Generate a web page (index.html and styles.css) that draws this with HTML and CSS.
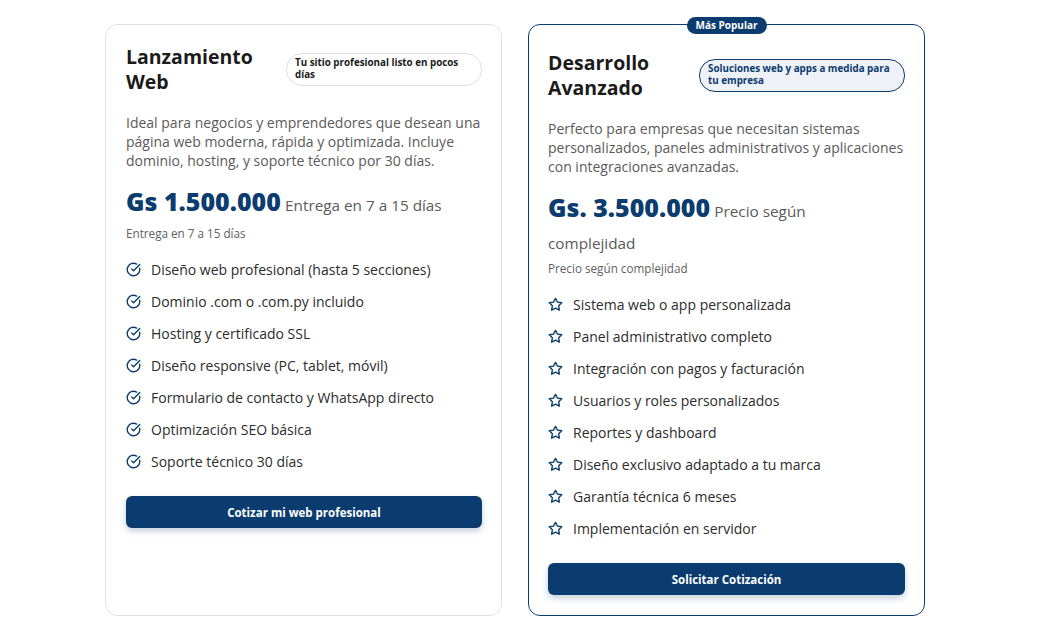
FILE: index.html
```html
<!DOCTYPE html>
<html lang="es">
<head>
<meta charset="utf-8">
<title>Planes</title>
<link rel="stylesheet" href="styles.css">
</head>
<body>
<main class="plans">
  <section class="plan">
    <header class="plan-head">
      <h2 class="plan-title">Lanzamiento Web</h2>
      <span class="tag tag-a">Tu sitio profesional listo en pocos días</span>
    </header>
    <p class="plan-desc">Ideal para negocios y emprendedores que desean una página web moderna, rápida y optimizada. Incluye dominio, hosting, y soporte técnico por 30 días.</p>
    <p class="price"><strong class="amount">Gs 1.500.000</strong> <span class="price-note">Entrega en 7 a 15 días</span></p>
    <p class="sub-note">Entrega en 7 a 15 días</p>
    <ul class="features">
      <li><svg class="ico" viewBox="0 0 24 24"><path d="M21.8 10A10 10 0 1 1 17 3.34"/><path d="m9 11 3 3L22 4"/></svg>Diseño web profesional (hasta 5 secciones)</li>
      <li><svg class="ico" viewBox="0 0 24 24"><path d="M21.8 10A10 10 0 1 1 17 3.34"/><path d="m9 11 3 3L22 4"/></svg>Dominio .com o .com.py incluido</li>
      <li><svg class="ico" viewBox="0 0 24 24"><path d="M21.8 10A10 10 0 1 1 17 3.34"/><path d="m9 11 3 3L22 4"/></svg>Hosting y certificado SSL</li>
      <li><svg class="ico" viewBox="0 0 24 24"><path d="M21.8 10A10 10 0 1 1 17 3.34"/><path d="m9 11 3 3L22 4"/></svg>Diseño responsive (PC, tablet, móvil)</li>
      <li><svg class="ico" viewBox="0 0 24 24"><path d="M21.8 10A10 10 0 1 1 17 3.34"/><path d="m9 11 3 3L22 4"/></svg>Formulario de contacto y WhatsApp directo</li>
      <li><svg class="ico" viewBox="0 0 24 24"><path d="M21.8 10A10 10 0 1 1 17 3.34"/><path d="m9 11 3 3L22 4"/></svg>Optimización SEO básica</li>
      <li><svg class="ico" viewBox="0 0 24 24"><path d="M21.8 10A10 10 0 1 1 17 3.34"/><path d="m9 11 3 3L22 4"/></svg>Soporte técnico 30 días</li>
    </ul>
    <button class="cta">Cotizar mi web profesional</button>
  </section>

  <section class="plan plan-featured">
    <span class="popular">Más Popular</span>
    <header class="plan-head">
      <h2 class="plan-title">Desarrollo Avanzado</h2>
      <span class="tag tag-b">Soluciones web y apps a medida para tu empresa</span>
    </header>
    <p class="plan-desc">Perfecto para empresas que necesitan sistemas personalizados, paneles administrativos y aplicaciones con integraciones avanzadas.</p>
    <p class="price"><strong class="amount">Gs. 3.500.000</strong> <span class="price-note">Precio según</span> <span class="price-note">complejidad</span></p>
    <p class="sub-note">Precio según complejidad</p>
    <ul class="features">
      <li><svg class="ico star" viewBox="0 0 24 24"><path d="M12 2l3.09 6.26L22 9.27l-5 4.87 1.18 6.88L12 17.77l-6.18 3.25L7 14.14 2 9.27l6.91-1.01z"/></svg>Sistema web o app personalizada</li>
      <li><svg class="ico star" viewBox="0 0 24 24"><path d="M12 2l3.09 6.26L22 9.27l-5 4.87 1.18 6.88L12 17.77l-6.18 3.25L7 14.14 2 9.27l6.91-1.01z"/></svg>Panel administrativo completo</li>
      <li><svg class="ico star" viewBox="0 0 24 24"><path d="M12 2l3.09 6.26L22 9.27l-5 4.87 1.18 6.88L12 17.77l-6.18 3.25L7 14.14 2 9.27l6.91-1.01z"/></svg>Integración con pagos y facturación</li>
      <li><svg class="ico star" viewBox="0 0 24 24"><path d="M12 2l3.09 6.26L22 9.27l-5 4.87 1.18 6.88L12 17.77l-6.18 3.25L7 14.14 2 9.27l6.91-1.01z"/></svg>Usuarios y roles personalizados</li>
      <li><svg class="ico star" viewBox="0 0 24 24"><path d="M12 2l3.09 6.26L22 9.27l-5 4.87 1.18 6.88L12 17.77l-6.18 3.25L7 14.14 2 9.27l6.91-1.01z"/></svg>Reportes y dashboard</li>
      <li><svg class="ico star" viewBox="0 0 24 24"><path d="M12 2l3.09 6.26L22 9.27l-5 4.87 1.18 6.88L12 17.77l-6.18 3.25L7 14.14 2 9.27l6.91-1.01z"/></svg>Diseño exclusivo adaptado a tu marca</li>
      <li><svg class="ico star" viewBox="0 0 24 24"><path d="M12 2l3.09 6.26L22 9.27l-5 4.87 1.18 6.88L12 17.77l-6.18 3.25L7 14.14 2 9.27l6.91-1.01z"/></svg>Garantía técnica 6 meses</li>
      <li><svg class="ico star" viewBox="0 0 24 24"><path d="M12 2l3.09 6.26L22 9.27l-5 4.87 1.18 6.88L12 17.77l-6.18 3.25L7 14.14 2 9.27l6.91-1.01z"/></svg>Implementación en servidor</li>
    </ul>
    <button class="cta">Solicitar Cotización</button>
  </section>
</main>
</body>
</html>
```

FILE: styles.css
```css
* { box-sizing: border-box; }

html, body {
  margin: 0;
  padding: 0;
  background: #ffffff;
}

body {
  font-family: "Open Sans", "DejaVu Sans", sans-serif;
  color: #222;
}

.plans {
  display: grid;
  grid-template-columns: 397px 397px;
  column-gap: 26px;
  padding: 24px 0 14px 105px;
}

.plan {
  position: relative;
  display: flex;
  flex-direction: column;
  align-items: stretch;
  border: 1px solid #dfe2ea;
  border-radius: 12px;
  padding: 19px 19px 20px 20px;
  background: #fff;
}

.plan-featured {
  border-color: #0b3c6f;
  padding-top: 25px;
  padding-left: 19px;
}

.popular {
  position: absolute;
  top: -8px;
  left: 50%;
  transform: translateX(-50%);
  background: #0b3c6f;
  color: #fff;
  font-size: 10px;
  font-weight: 700;
  line-height: 17px;
  padding: 0 9px;
  border-radius: 9px;
  white-space: nowrap;
}

.plan-head {
  display: flex;
  align-items: center;
  justify-content: space-between;
  gap: 12px;
}

.plan-title {
  margin: 0;
  font-size: 19.5px;
  font-weight: 700;
  line-height: 25px;
  color: #1b1b1b;
  max-width: 130px;
}

.tag {
  font-size: 9.8px;
  font-weight: 700;
  line-height: 12px;
  padding: 3px 10px 4px 8px;
  border-radius: 16px;
  border: 1px solid #dde1e8;
  background: #fff;
  color: #1b1b1b;
}

.tag-a { width: 196px; }

.tag-b {
  width: 206px;
  background: #eef1f5;
  border-color: #0b3c6f;
  color: #0b3c6f;
}

.plan-desc {
  margin: 19px 0 0;
  font-size: 14px;
  line-height: 19px;
  color: #5a5a5a;
}

.price {
  margin: 15px 0 0;
  max-width: 340px;
  line-height: 32px;
  color: #0b3c6f;
}

.amount {
  font-size: 25px;
  font-weight: 800;
  color: #0b3c6f;
}

.price-note {
  font-size: 15.3px;
  color: #5a5a5a;
  white-space: nowrap;
}

.sub-note {
  margin: 4px 0 0;
  font-size: 11.7px;
  line-height: 16px;
  color: #5f5f5f;
}

.plan-featured .sub-note { margin-top: 1px; }

.features {
  list-style: none;
  margin: 12px 0 0;
  padding: 0;
}

.features li {
  display: flex;
  align-items: center;
  gap: 10px;
  height: 32px;
  font-size: 14px;
  color: #2c2c2c;
}

.ico {
  width: 15px;
  height: 15px;
  flex: none;
  fill: none;
  stroke: #0b3c6f;
  stroke-width: 2.2;
  stroke-linecap: round;
  stroke-linejoin: round;
}

.cta {
  margin-top: 19px;
  height: 32px;
  border: 0;
  border-radius: 6px;
  background: #0b3c6f;
  color: #fff;
  font-family: inherit;
  font-size: 11.5px;
  font-weight: 700;
  box-shadow: 0 3px 6px rgba(11, 60, 111, 0.25);
}
```
